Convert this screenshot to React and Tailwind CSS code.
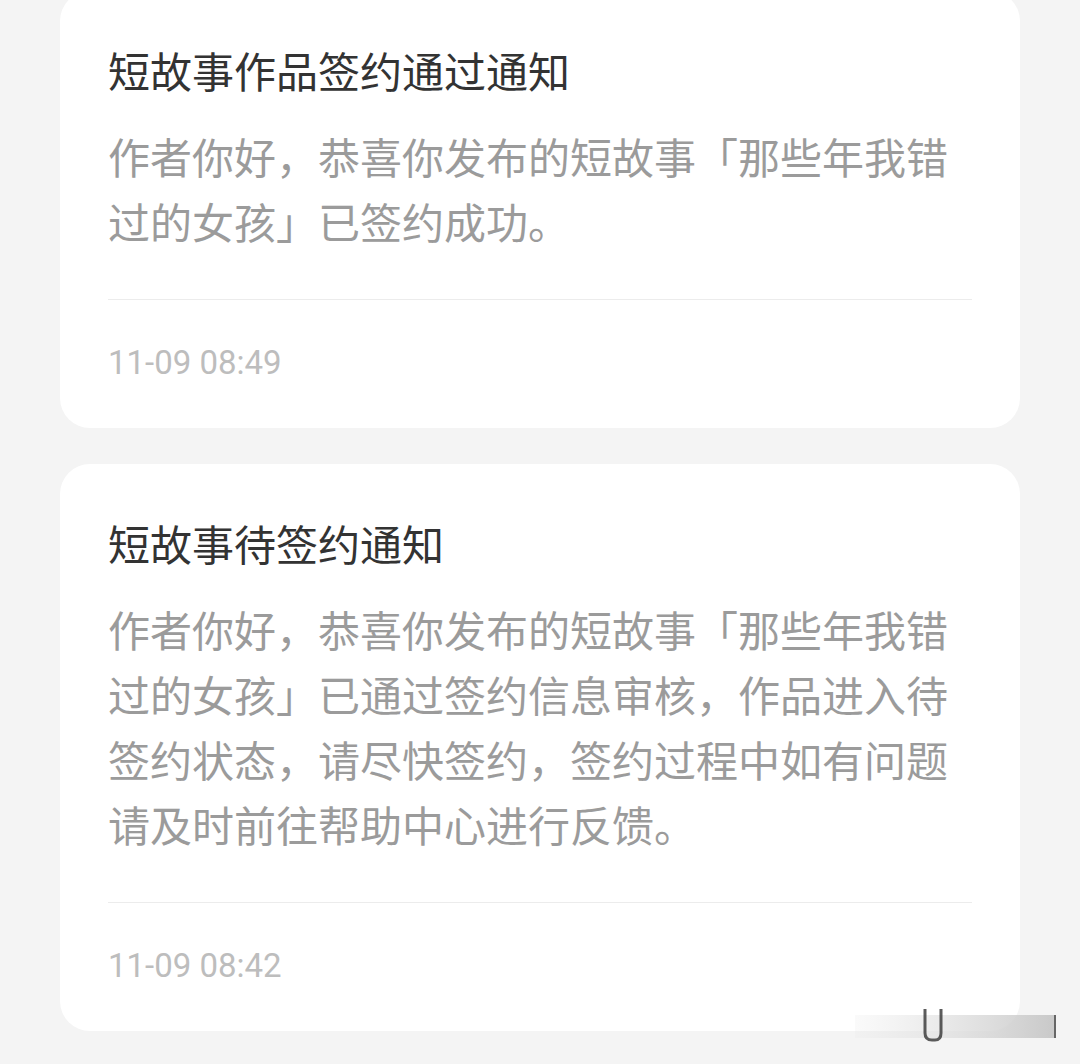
import React from "react";

const notices = [
  {
    title: "短故事作品签约通过通知",
    body: "作者你好，恭喜你发布的短故事「那些年我错过的女孩」已签约成功。",
    time: "11-09 08:49",
  },
  {
    title: "短故事待签约通知",
    body: "作者你好，恭喜你发布的短故事「那些年我错过的女孩」已通过签约信息审核，作品进入待签约状态，请尽快签约，签约过程中如有问题请及时前往帮助中心进行反馈。",
    time: "11-09 08:42",
  },
];

const NoticeCard = ({ notice, first }) => (
  <div
    className={
      first
        ? "mt-[-9px] bg-white rounded-[30px] px-[48px] pt-[51px] pb-[46px]"
        : "bg-white rounded-[30px] px-[48px] pt-[51px] pb-[46px]"
    }
  >
    <h2 className="text-[42px] leading-[56px] text-[#333333] font-normal">{notice.title}</h2>
    <p className="mt-[25px] text-[42px] leading-[65px] text-[#9b9b9b]">{notice.body}</p>
    <div className="mt-[46px] h-px bg-[#ececec]" />
    <div
      className="mt-[44px] text-[33px] leading-[38px] text-[#bdbdbd]"
      style={{ fontFamily: "Roboto, 'Liberation Sans', sans-serif" }}
    >
      {notice.time}
    </div>
  </div>
);

export default function App() {
  return (
    <div
      className="relative w-[1080px] h-[1064px] overflow-hidden bg-[#f4f4f4]"
      style={{ fontFamily: "'Noto Sans CJK SC', 'Noto Sans', sans-serif" }}
    >
      <div className="flex flex-col gap-[36px] px-[60px]">
        {notices.map((n, i) => (
          <NoticeCard key={i} notice={n} first={i === 0} />
        ))}
      </div>

      {/* faint watermark strip in the corner */}
      <svg className="absolute left-[852px] top-[1005px]" width="206" height="40" viewBox="0 0 206 40">
        <defs>
          <linearGradient id="strip" x1="0" x2="1" y1="0" y2="0">
            <stop offset="0" stopColor="#e6e6e6" stopOpacity="0.2" />
            <stop offset="0.5" stopColor="#dcdcdc" stopOpacity="0.7" />
            <stop offset="1" stopColor="#c4c4c4" stopOpacity="0.9" />
          </linearGradient>
        </defs>
        <rect x="3" y="10" width="200" height="23" fill="url(#strip)" />
        <path d="M73 4 V28 Q73 35 80 35 H83 Q89 35 89 28 V4" fill="none" stroke="#333" strokeWidth="3" opacity="0.8" />
        <line x1="203" y1="10" x2="203" y2="33" stroke="#666" strokeWidth="2" />
      </svg>
    </div>
  );
}
